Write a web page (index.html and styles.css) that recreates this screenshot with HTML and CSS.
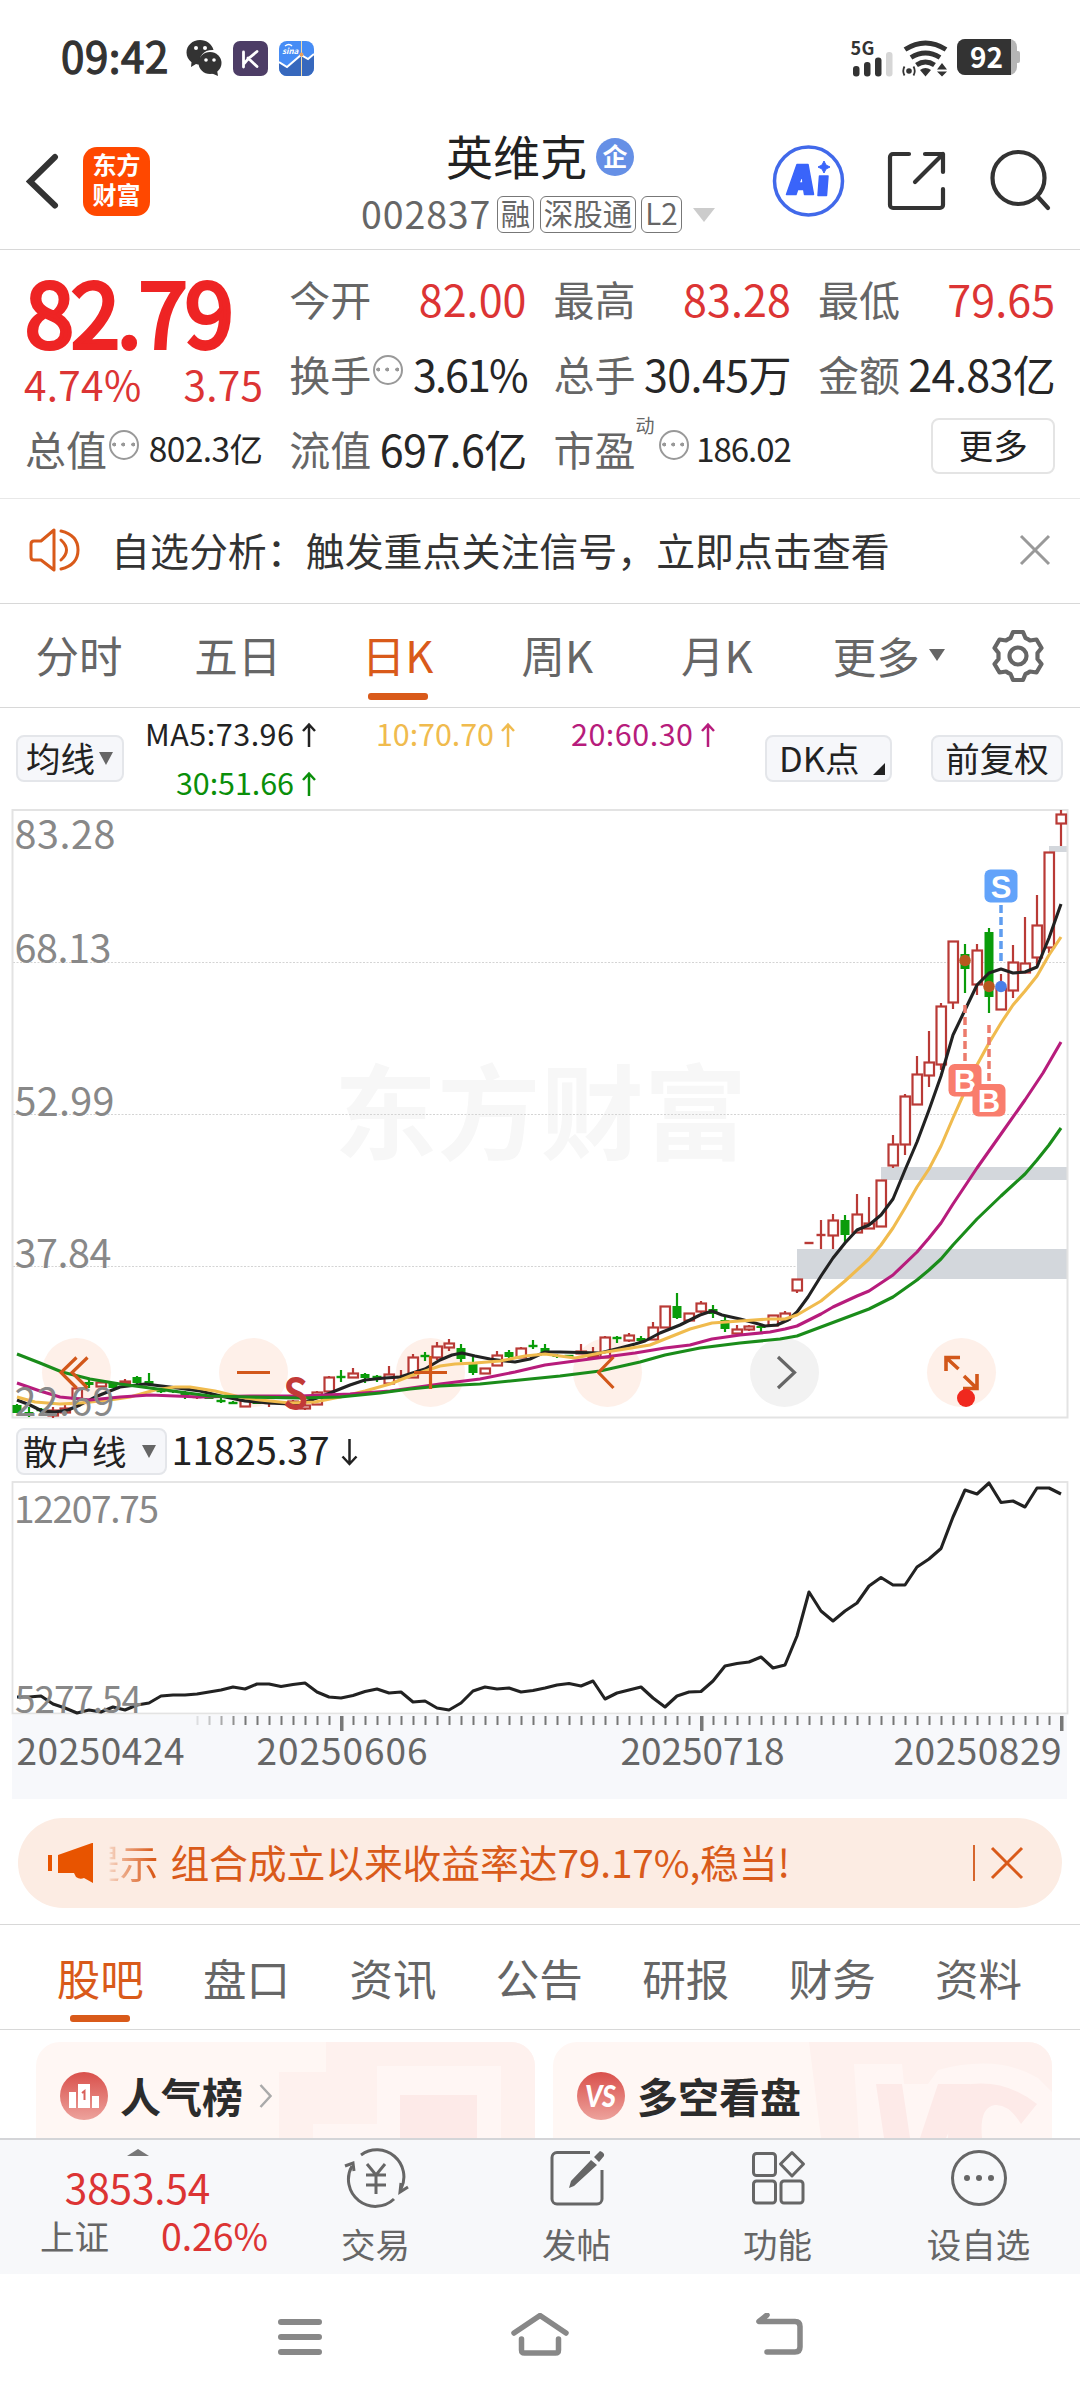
FILE: index.html
```html
<!DOCTYPE html>
<html lang="zh-CN">
<head>
<meta charset="utf-8">
<title>英维克 002837</title>
<link rel="stylesheet" href="styles.css">
</head>
<body>
<div class="status">
  <span class="clock">09:42</span>
  <svg class="st-wechat" width="36" height="38" viewBox="0 0 36 38"><path fill="#333" d="M14 1C6.500 1 .5 6.500 .5 13.500c0 4 2 7.500 5 9.700L5 28l5-3c1.500.4 3 .6 4.500.5C12 17 18 10.500 27.500 11 26 5 20.500 1 14 1z"/><ellipse cx="24" cy="24" rx="11.500" ry="11" fill="#333"/><path fill="#333" d="M25 34l7 3-1-6z"/><g fill="#fff"><circle cx="10" cy="9" r="2"/><circle cx="19" cy="9" r="2"/><circle cx="20" cy="21" r="1.800"/><circle cx="28" cy="21" r="1.800"/></g></svg>
  <svg class="st-app" width="35" height="35" viewBox="0 0 35 35"><rect width="35" height="35" rx="7" fill="#4d3d66"/><path d="M10.500 11v15M24 10.500l-9 7.500c-2 2-3 4-4.500 5M15 17l9 8.500" fill="none" stroke="#fff" stroke-width="2.800" stroke-linecap="round"/></svg>
  <svg class="st-app" width="35" height="35" viewBox="0 0 35 35"><defs><clipPath id="sc"><rect width="35" height="35" rx="8"/></clipPath></defs><g clip-path="url(#sc)"><rect width="35" height="35" fill="#468cf5"/><path d="M0 21l8 5 14-12 7 4 6-5v22H0z" fill="#3768bd"/><path d="M0 21l8 5 14-12 7 4 6-5" fill="none" stroke="#fff" stroke-width="2"/><path d="M22.500 0v35" stroke="#f2dcae"/><circle cx="22.500" cy="13.500" r="2" fill="#e8a060"/><text x="3" y="13" font-size="8" font-weight="700" font-style="italic" fill="#fff">sina</text><path d="M6 5q4-3 7 0" stroke="#fff" fill="none" stroke-width="1.500"/></g></svg>
  <svg class="st-right" width="172" height="46" viewBox="850 35 172 46">
    <text x="850.500" y="54.500" font-size="18" font-weight="700" fill="#333" textLength="24">5G</text>
    <g fill="#333"><rect x="853" y="66" width="6.500" height="10.500" rx="3"/><rect x="864" y="62" width="6.500" height="14.500" rx="3"/><rect x="875" y="57.500" width="6.500" height="19" rx="3"/><rect x="886" y="52" width="6.500" height="24.500" rx="3" fill="#d6d6d6"/></g>
    <g fill="none" stroke="#333" stroke-width="5"><path d="M905 49.500q20.500-13 41 0"/><path d="M911 57.500q14.500-9 29 0"/><path d="M916.500 65q9-6 18 0"/></g>
    <path d="M920 70q5.500-4 11 0l-5.500 6.500z" fill="#333"/>
    <circle cx="909" cy="71" r="2.800" fill="#333"/><path d="M904.500 66.500q-2.500 4.500 0 9M913.500 66.500q2.500 4.500 0 9" fill="none" stroke="#333" stroke-width="1.800"/>
    <path d="M937 69.500l5-6.500 5 6.500zM937 71.500l5 5 5-5z" fill="#333"/>
    <rect x="957" y="39" width="60" height="36" rx="8" fill="#b5b5b5"/><rect x="1014" y="51" width="6" height="12" rx="2" fill="#b5b5b5"/>
    <path d="M965 39h46v36h-46a8 8 0 0 1-8-8V47a8 8 0 0 1 8-8z" fill="#333"/>
    <text x="970" y="67.500" font-size="28" font-weight="700" fill="#fff" textLength="33">92</text>
  </svg>
</div>

<header class="header">
  <svg class="back" width="34" height="56" viewBox="0 0 34 56"><path d="M29 4L4 28.500l25 24" fill="none" stroke="#333" stroke-width="6" stroke-linecap="round"/></svg>
  <div class="logo"><span>东方</span><span>财富</span></div>
  <div class="title">
    <div class="name">英维克<span class="qi">企</span></div>
    <div class="code"><span class="num">002837</span><span class="tag t1">融</span><span class="tag t2">深股通</span><span class="tag t3">L2</span><i class="tri-down"></i></div>
  </div>
  <svg class="h-icons" width="284" height="76" viewBox="771 144 284 76">
    <circle cx="808.500" cy="182" r="34" fill="none" stroke="#4169ea" stroke-width="3.500"/>
    <path d="M786.500 195.500L797 165.500h11l5.500 30h-9l-.8-5h-6l-1.700 5zM799 184h4l-.6-8z" fill="#3a64fa" stroke="#3a64fa" stroke-width="1.500" stroke-linejoin="round"/>
    <path d="M819.500 177h8.500l-1.500 19.500h-8.500z" fill="#3a64fa" stroke="#3a64fa" stroke-width="1.500" stroke-linejoin="round"/><path d="M824 162l2 4 4 2-4 2-2 4-2-4-4-2 4-2z" fill="#3a64fa" stroke="#3a64fa" stroke-width="1"/>
    <g fill="none" stroke="#333" stroke-width="4.200" stroke-linecap="round" stroke-linejoin="round"><path d="M909 155h-16a3 3 0 0 0-3 3v48a3 3 0 0 0 3 3h47a3 3 0 0 0 3-3v-16M925 155h18v18M943 155l-28 28"/><circle cx="1018.500" cy="179" r="26"/><path d="M1038 198l10 11"/></g>
  </svg>
</header>

<section class="quote">
  <div class="main"><div class="price">82.79</div><div class="chg"><span>4.74%</span><span>3.75</span></div></div>
  <div class="q"><span>今开</span><b class="red">82.00</b></div>
  <div class="q"><span>最高</span><b class="red">83.28</b></div>
  <div class="q"><span>最低</span><b class="red">79.65</b></div>
  <div class="q"><span>换手</span><i class="dots"></i><b class="rate">3.61%</b></div>
  <div class="q"><span>总手</span><b>30.45万</b></div>
  <div class="q"><span>金额</span><b>24.83亿</b></div>
  <div class="q"><span>总值</span><i class="dots"></i><b class="sm">802.3亿</b></div>
  <div class="q"><span>流值</span><b>697.6亿</b></div>
  <div class="q"><span>市盈</span><sup>动</sup><i class="dots"></i><b class="sm pe">186.02</b></div>
  <div class="q"><button class="more">更多</button></div>
</section>

<section class="alert">
  <svg width="54" height="46" viewBox="0 0 54 46"><g fill="none" stroke="#d95a1a" stroke-width="3" stroke-linejoin="round" stroke-linecap="round"><path d="M26 3v40L13 33H6q-3 0-3-3V17q0-3 3-3h7z"/><path d="M33 13q11 10 0 20M33 4q17 4 17 19T33 42"/></g></svg>
  <p>自选分析：触发重点关注信号，立即点击查看</p>
  <svg width="32" height="32" viewBox="0 0 32 32"><path d="M2 2l28 28M30 2L2 30" stroke="#999" stroke-width="3"/></svg>
</section>

<nav class="periods">
  <span>分时</span><span>五日</span><span class="on">日K</span><span>周K</span><span>月K</span><span class="pm">更多<i></i></span>
  <svg width="56" height="56" viewBox="-28 -28 56 56"><g fill="none" stroke="#666" stroke-width="4.200" stroke-linejoin="round"><path d="M-5-24H5L7.500-18Q10-17 12-15.500L18.500-16.500 23.500-8 19.500-3V3L23.500 8 18.500 16.500 12 15.500Q10 17 7.500 18L5 24H-5L-7.500 18Q-10 17-12 15.500L-18.500 16.500-23.500 8-19.500 3V-3L-23.500-8-18.500-16.500-12-15.500Q-10-17-7.500-18Z"/><circle r="8.500"/></g></svg>
</nav>

<section class="ma">
  <button class="chip c1">均线<i class="td"></i></button>
  <svg class="ma-vals" width="600" height="90" viewBox="140 716 600 90" font-size="30.500">
    <g fill="#222"><text x="145" y="746" textLength="149">MA5:73.96</text><path class="up" d="M309 747v-22M303 731l6-6.500 6 6.500" stroke="#222"/></g>
    <g fill="#f0bb4e"><text x="376" y="746" textLength="118">10:70.70</text><path class="up" d="M508 747v-22M502 731l6-6.500 6 6.500" stroke="#f0bb4e"/></g>
    <g fill="#b71c7c"><text x="571" y="746" textLength="122">20:60.30</text><path class="up" d="M708 747v-22M702 731l6-6.500 6 6.500" stroke="#b71c7c"/></g>
    <g fill="#0a8f0a"><text x="176" y="795" textLength="118">30:51.66</text><path class="up" d="M309 796v-22M303 780l6-6.500 6 6.500" stroke="#0a8f0a"/></g>
  </svg>
  <button class="chip c2">DK点<i class="corner"></i></button>
  <button class="chip c3">前复权</button>
</section>

<svg class="chart" width="1080" height="612" viewBox="0 808 1080 612">
  <text x="334" y="1152" font-size="103" font-weight="700" fill="#f7f7f7" textLength="413">东方财富</text>
  <g fill="#d3d7dc"><rect x="797" y="1249" width="270" height="30"/><rect x="881" y="1167" width="186" height="13"/><rect x="1049" y="846" width="18" height="6"/></g>
  <g stroke="#d4d4d4" stroke-width="1" stroke-dasharray="2 1.500"><path d="M13 962.500H1067M13 1114.500H1067M13 1266.500H797"/></g>
  <rect x="12.500" y="810" width="1055" height="607.500" fill="none" stroke="#e3e3e3" stroke-width="2"/>
  <g fill="#fef0e9"><circle cx="76.500" cy="1372.500" r="34.500"/><circle cx="253.500" cy="1372.500" r="34.500"/><circle cx="430.500" cy="1372.500" r="34.500"/><circle cx="607.500" cy="1372.500" r="34.500"/><circle cx="784.500" cy="1372.500" r="34.500" fill="#f2f2f2"/><circle cx="961.500" cy="1372.500" r="34.500"/></g>
  <g id="candles"></g>
  <g class="line">
    <polyline stroke="#222" points="17,1400 30,1405 42,1411 55,1412 68,1410 80,1405 95,1397 120,1387 145,1384 170,1387 200,1391 225,1397 245,1401 269,1403 290,1404 305,1402 320,1397 335,1391 350,1385 365,1380 385,1378 400,1377 425,1369 440,1360 452,1355 462,1353 475,1356 490,1359 505,1361 515,1362 530,1359 545,1352 560,1352 600,1353 620,1348 635,1344 645,1341 660,1333 680,1325 700,1315 712,1311 722,1315 740,1319 755,1323 765,1326 777,1325 788,1320 797,1312 808,1297 821,1276 833,1258 845,1243 857,1230 869,1225 881,1215 893,1199 905,1170 917,1142 929,1110 941,1076 953,1035 965,1010 977,985 989,973 1001,969 1013,973 1025,972 1037,967 1049,938 1061,904"/>
    <polyline stroke="#f0bb4e" points="17,1397 35,1402 60,1404 80,1403 110,1400 130,1397 155,1390 175,1387 190,1387 215,1391 240,1397 260,1400 290,1403 315,1402 340,1397 365,1391 390,1384 410,1376 425,1371 440,1366 455,1364 475,1363 500,1361 525,1356 545,1354 575,1358 600,1353 625,1349 650,1345 670,1337 690,1329 712,1323 740,1321 770,1319 785,1319 797,1315 821,1301 845,1281 869,1259 881,1245 893,1228 905,1208 917,1187 929,1169 941,1146 953,1118 965,1091 977,1065 989,1043 1001,1023 1013,1005 1025,991 1037,976 1049,955 1061,937"/>
    <polyline stroke="#b71c7c" points="17,1383 40,1391 60,1397 90,1400 120,1397 150,1395 200,1397 250,1396 300,1396 350,1394 390,1391 440,1384 480,1379 515,1372 545,1365 590,1359 635,1353 665,1348 690,1345 712,1339 740,1335 770,1332 785,1329 797,1326 821,1314 833,1307 857,1296 869,1291 893,1275 917,1252 929,1238 941,1223 953,1204 965,1186 977,1168 1001,1134 1025,1100 1043,1073 1061,1042"/>
    <polyline stroke="#1a8c1a" points="17,1354 40,1363 62,1372 90,1379 120,1384 150,1388 180,1392 210,1396 250,1397 300,1398 340,1397 380,1393 410,1389 440,1386 480,1384 520,1380 560,1376 600,1371 640,1362 665,1355 700,1348 740,1343 780,1339 797,1336 821,1327 845,1318 869,1309 893,1297 917,1280 929,1270 941,1259 953,1245 977,1219 1001,1196 1025,1174 1037,1160 1049,1145 1061,1128"/>
  </g>
  <g fill="#b9581f"><circle cx="965" cy="960.500" r="5.800"/><circle cx="989" cy="986.500" r="5.800"/><circle cx="1001" cy="986.500" r="5.800" fill="#4a7fe8"/></g>
  <g fill="none" stroke-width="3.500" stroke-dasharray="8 4"><path d="M1001 905V962" stroke="#5f9df0"/><path d="M965 1005V1062M989 1025V1083" stroke="#ec7b6c"/></g>
  <g font-size="31" font-weight="700" fill="#fff" text-anchor="middle" class="mark">
    <rect x="984.500" y="869.500" width="33" height="33" rx="6" fill="#62a3fa"/><text x="1001" y="898">S</text>
    <rect x="948.500" y="1064" width="33" height="32.500" rx="6" fill="#f97d6d"/><text x="965" y="1092">B</text>
    <rect x="972.500" y="1084" width="33" height="32.500" rx="6" fill="#f97d6d"/><text x="989" y="1112">B</text>
  </g>
  <text x="284" y="1407.500" font-size="40" class="sell" fill="#c23a38" textLength="23" lengthAdjust="spacingAndGlyphs">S</text>
  <g fill="#888" font-size="39.500"><text x="14.500" y="849" textLength="101">83.28</text><text x="14.500" y="963" textLength="97">68.13</text><text x="14.500" y="1115.500" textLength="100">52.99</text><text x="14.500" y="1267.500" textLength="97">37.84</text><text x="14.500" y="1416" textLength="100">22.69</text></g>
  <g fill="none" stroke="#d2571a" stroke-width="3.200"><path d="M76.500 1357.500L61 1372.500l15.500 15.500M87.500 1357.500L72 1372.500l15.500 15.500M237 1372.500h33M414 1372.500h33M430.500 1356v33M613.500 1357l-15 15.500 15 15.500"/><path d="M778 1357l16.500 15.500L778 1388" stroke="#666"/><path d="M946 1371v-13.500h14M946 1357.500l12.500 11.500M977 1374v14.500h-14M977 1388.500l-13-12.500" stroke-width="3.600"/></g>
  <circle cx="966" cy="1398" r="9" fill="#f0281e"/>
</svg>

<section class="ind">
  <button class="chip c4">散户线<i class="td"></i></button>
  <svg width="200" height="46" viewBox="170 1428 200 46"><text x="171.500" y="1464.500" font-size="38" fill="#222" textLength="158">11825.37</text><path class="up" d="M349.500 1439v25M342.500 1456.500l7 7.500 7-7.500" stroke="#222"/></svg>
</section>

<svg class="chart" width="1080" height="318" viewBox="0 1481 1080 318">
  <rect x="12" y="1715" width="1055" height="84" fill="#f7f8fb"/>
  <rect x="12.500" y="1482" width="1055" height="231.500" fill="#fff" stroke="#e3e3e3" stroke-width="1.800"/>
  <g class="line"><polyline stroke="#222" points="17,1697 29,1697 41,1696 53,1704 65,1708 77,1713 89,1710 101,1712 113,1707 125,1710 137,1705 149,1703 161,1696 173,1695 185,1695 197,1694 209,1692 221,1690 233,1687 245,1689 257,1684 269,1684 281,1686.500 293,1684.500 305,1683 317,1692 329,1697 341,1698 353,1695.500 365,1691.500 377,1689 389,1693 401,1692 413,1702 425,1701 437,1708 449,1710 461,1703 473,1691 485,1687 497,1689 509,1688 521,1692 533,1690.500 545,1688 557,1685 569,1683.500 581,1686 593,1681 605,1699 617,1693 629,1690 641,1687 653,1698 665,1707 677,1696 689,1692 701,1691.500 713,1681 725,1666 737,1663.500 749,1662 761,1657 773,1668 785,1665 797,1636 809,1592 821,1611 833,1621 845,1611 857,1603 869,1586 881,1577.500 893,1585 905,1585 917,1567 929,1559 941,1548.500 953,1517 965,1490 977,1494 989,1483 1001,1502.500 1013,1501 1025,1507 1037,1488 1049,1488 1061,1494"/></g>
  <g id="ticks" fill="#777"></g>
  <g fill="#888" font-size="37"><text x="14" y="1522.500" textLength="145">12207.75</text><text x="15" y="1713" textLength="127">5277.54</text></g>
  <g fill="#666" font-size="37"><text x="16.500" y="1765" textLength="168">20250424</text><text x="256.500" y="1765" textLength="171">20250606</text><text x="620.500" y="1765" textLength="164">20250718</text><text x="893.500" y="1765" textLength="168">20250829</text></g>
</svg>

<section class="notice">
  <svg width="48" height="42" viewBox="0 0 48 42"><path d="M46 1v40l-9-5q-4 2-8-1l-2-4H11V13L45 1z" fill="#e85400"/><path d="M3 13v16" stroke="#e85400" stroke-width="4"/></svg>
  <p><span class="fade">提示</span>组合成立以来收益率达79.17%,稳当!</p>
  <svg class="nx" width="54" height="38" viewBox="0 0 54 38"><path d="M2 1v36" stroke="#d2571a" stroke-width="1.800"/><path d="M20 4l30 30M50 4L20 34" stroke="#d95a1a" stroke-width="3"/></svg>
</section>

<nav class="subtabs"><span class="on">股吧</span><span>盘口</span><span>资讯</span><span>公告</span><span>研报</span><span>财务</span><span>资料</span></nav>

<section class="cards">
  <div class="card">
    <svg class="bg" width="499" height="96" viewBox="0 0 499 96"><path d="M290 0H499V96H243V30h47z" fill="#fef1ee"/><path d="M341 24h124v72H277V82h64z" fill="#fff6f4"/><rect x="364" y="53" width="77" height="43" fill="#fdeae8"/></svg>
    <svg class="ic" width="48" height="48" viewBox="0 0 48 48"><defs><linearGradient id="g" x1="0" y1="0" x2="0" y2="1"><stop offset="0" stop-color="#d9504b"/><stop offset="1" stop-color="#eda29c"/></linearGradient></defs><circle cx="24" cy="24" r="24" fill="url(#g)"/><path d="M9 36V20h7v16zM18 36V12h12v24zM32 36V24h7v12z" fill="#fff"/><path d="M22 21l2.500-2v9" fill="none" stroke="#d9605b" stroke-width="2"/></svg>
    <h3>人气榜</h3><svg width="14" height="26" viewBox="0 0 14 26"><path d="M1.500 2l10 11-10 11" fill="none" stroke="#aaa" stroke-width="2.500"/></svg>
  </div>
  <div class="card">
    <svg class="bg" width="499" height="96" viewBox="0 0 499 96"><path d="M256 0H499V96H268z" fill="#fef1ee"/><path d="M301 22h48l2 20h24l10-14q60-16 100 8l14 14v46H306z" fill="#fff6f4"/><path d="M323 42h26l8 54h-26zM385 42h33l-25 54h-26z" fill="#fdeae8"/><path d="M418 42q36-4 66 20l-16 20q-12-20-26-19-16 2-13 33h-34q0-30 23-54z" fill="#fdeae8"/></svg>
    <svg class="ic" width="48" height="48" viewBox="0 0 48 48"><circle cx="24" cy="24" r="24" fill="url(#g)"/><text x="8" y="35" font-size="30" font-weight="900" font-style="italic" class="lato" fill="#fff" textLength="31" lengthAdjust="spacingAndGlyphs">VS</text></svg>
    <h3>多空看盘</h3>
  </div>
</section>

<footer class="bar">
  <div class="idx"><i class="tri-up"></i><div class="pt">3853.54</div><div class="row"><span>上证</span><b>0.26%</b></div></div>
  <div class="it"><svg width="66" height="60" viewBox="-33 -30 66 60"><g fill="none" stroke="#666" stroke-width="3"><path d="M-15-23A27 27 0 0 1 25 11M18 21A27 27 0 0 1-24-12"/><path d="M-31-12l8-3 1 8M32 9l-8 5 1-9"/><path d="M-9-14L0-3 9-14M0-3V16M-10-3H10M-10 7H10"/></g></svg><span>交易</span></div>
  <div class="it"><svg width="66" height="60" viewBox="-33 -30 66 60"><g fill="none" stroke="#666" stroke-width="3"><path d="M13-25.500H-20a5 5 0 0 0-5 5V21a5 5 0 0 0 5 5H20a5 5 0 0 0 5-5V-8"/></g><path d="M14-18l6 5L-3 8l-5 2 2-7zM17-21l6-6q5 2 4 5l-5 6z" fill="#666"/></svg><span>发帖</span></div>
  <div class="it"><svg width="66" height="60" viewBox="-33 -30 66 60"><g fill="none" stroke="#666" stroke-width="3" stroke-linejoin="round"><rect x="-24.500" y="-24.500" width="22" height="22" rx="3"/><rect x="-24.500" y="3" width="22" height="22" rx="3"/><rect x="3" y="3" width="22" height="22" rx="3"/><path d="M14-25.500L25.500-14 14-2 2.500-14z"/></g></svg><span>功能</span></div>
  <div class="it"><svg width="66" height="60" viewBox="-33 -30 66 60"><circle r="26.500" fill="none" stroke="#666" stroke-width="3"/><g fill="#666"><circle cx="-12" r="3"/><circle r="3"/><circle cx="12" r="3"/></g></svg><span>设自选</span></div>
</footer>

<div class="sysnav">
  <svg width="48" height="48" viewBox="0 0 48 48"><path d="M5 9h38M5 24h38M5 39h38" stroke="#888" stroke-width="6" stroke-linecap="round"/></svg>
  <svg width="60" height="48" viewBox="0 0 60 48"><g fill="none" stroke="#888" stroke-width="5.500" stroke-linecap="round" stroke-linejoin="round"><path d="M4 20L30 2.500 56 20"/><path d="M11.500 26v11q0 3 3 3h31q3 0 3-3V26"/></g></svg>
  <svg width="52" height="48" viewBox="0 0 52 48"><path d="M14 2L6 8.500h36q5 0 5 5V34q0 5-5 5H14" fill="none" stroke="#888" stroke-width="5.500" stroke-linecap="round" stroke-linejoin="round"/></svg>
</div>
<script src="script.js"></script>
</body>
</html>
```
FILE: styles.css
```css
* { box-sizing: border-box; }
body { margin: 0; width: 1080px; height: 2400px; overflow: hidden; background: #fff; color: #222; font-family: "Noto Sans CJK SC", "Noto Sans", sans-serif; display: flex; flex-direction: column; }
svg { display: block; flex: none; }
button { font: inherit; color: inherit; padding: 0; margin: 0; white-space: nowrap; }
i { font-style: normal; }
p, h3 { margin: 0; }
span, b, p, h3 { white-space: nowrap; }

.status { height: 112px; flex: none; display: flex; align-items: center; padding: 4px 58px 0 61px; }
.clock { font-size: 42px; line-height: 60px; width: 125px; font-weight: 400; letter-spacing: .6px; color: #333; -webkit-text-stroke: 1.300px #333; margin-top: -7px; }
.st-wechat { margin-right: 11px; }
.st-app { margin-right: 11px; }
.st-right { margin-left: auto; }

.header { height: 138px; flex: none; display: flex; align-items: center; border-bottom: 1.500px solid #d8d8d8; }
.back { margin-left: 26px; margin-top: 1px; }
.logo { margin-left: 23px; margin-top: 1px; width: 67px; height: 69px; border-radius: 14px; background: #ff4800; color: #fff; font-weight: 700; font-size: 24px; line-height: 30px; display: flex; flex-direction: column; align-items: center; justify-content: center; padding-bottom: 4px; }
.title { margin-left: 211px; width: 361px; height: 138px; }
.name { display: flex; align-items: center; font-size: 47px; height: 60px; line-height: 60px; margin: 13px 0 0 85px; }
.qi { width: 38px; height: 38px; border-radius: 50%; background: #6690e6; color: #fff; font-size: 25px; line-height: 34px; text-align: center; font-weight: 700; margin: 4px 0 0 9px; }
.code { display: flex; align-items: center; height: 40px; margin-top: 10px; color: #666; }
.num { font-size: 37.500px; line-height: 40px; width: 136px; letter-spacing: .9px; margin-top: -4px; }
.tag { height: 37px; border: 1.500px solid #777; border-radius: 6px; font-size: 29.500px; line-height: 31px; text-align: center; margin-right: 6px; }
.t1 { width: 37px; }
.t2 { width: 96px; margin-right: 5px; }
.t3 { width: 41px; margin-right: 11px; }
.tri-down { border: 11px solid transparent; border-top: 14px solid #ccc; border-bottom: 0; }
.h-icons { margin-left: auto; margin-right: 25px; margin-top: 1px; }
.lato { font-family: Lato, sans-serif; }

.quote { height: 249px; flex: none; padding: 10px 25px 0 25px; display: grid; grid-template-columns: repeat(4, 237.300px); grid-template-rows: repeat(3, 75px); column-gap: 27px; border-bottom: 1.500px solid #e8e8e8; }
.main { grid-row: span 2; color: #ee2424; }
.price { font-size: 88px; line-height: 96px; font-weight: 400; letter-spacing: -2.800px; margin: 2px 0 0 0; -webkit-text-stroke: 4px #ee2424; }
.chg { display: flex; justify-content: space-between; font-size: 40.500px; line-height: 50px; color: #dc3434; margin: 1px -1px 0 -1px; letter-spacing: .3px; }
.q { display: flex; align-items: center; font-size: 41px; line-height: 60px; color: #666; }
.q b { margin-left: auto; font-weight: 400; color: #262626; font-size: 43px; letter-spacing: -.6px; }
.q b.red { color: #dc3434; letter-spacing: .1px; }
.q b.rate { letter-spacing: -1.900px; }
.q b.sm { font-size: 33.500px; }
.q b.pe { font-size: 33px; letter-spacing: -1px; }
.q sup { font-size: 19px; line-height: 20px; align-self: flex-start; margin-top: 5px; color: #666; }
.dots { width: 30px; height: 30px; border: 2.500px solid #999; border-radius: 50%; margin: -5px 0 0 2px; background: radial-gradient(circle, #999 1.800px, transparent 2.200px) 0 0 / 6.500px 25px no-repeat, radial-gradient(circle, #999 1.800px, transparent 2.200px) 9.200px 0 / 6.500px 25px no-repeat, radial-gradient(circle, #999 1.800px, transparent 2.200px) 18.500px 0 / 6.500px 25px no-repeat; }
sup + .dots { margin-left: 4px; }
.more { margin-left: auto; width: 124px; height: 56px; border: 2px solid #e4e4e4; border-radius: 8px; background: #fff; font-size: 34.500px; line-height: 46px; color: #222; padding-bottom: 4px; margin-top: -3px; }

.alert { height: 105px; flex: none; display: flex; align-items: center; padding: 0 29px 2px 28px; border-bottom: 1.500px solid #d8d8d8; }
.alert p { font-size: 38.950px; line-height: 60px; margin: -3px auto 0 29px; color: #333; }

.periods { height: 104px; flex: none; display: grid; grid-template-columns: 158px repeat(4, 159.700px) 172px 1fr; align-items: center; border-bottom: 1.500px solid #d8d8d8; color: #666; font-size: 43.500px; }
.periods span { text-align: center; height: 104px; line-height: 102px; position: relative; }
.periods .pm { display: flex; align-items: center; gap: 9px; padding-left: 36px; }
.pm i { border: 8px solid transparent; border-top: 12px solid #666; border-bottom: 0; margin-top: -3px; }
.periods svg { margin-left: 21px; }
.periods .on, .subtabs .on { color: #d95a1a; }
.on::after { content: ""; position: absolute; left: 50%; bottom: 8px; width: 60px; height: 7px; margin-left: -30px; border-radius: 3px; background: #d95a1a; }

.ma { height: 100px; flex: none; display: flex; align-items: flex-start; padding: 27px 15px 0 16px; }
.ma-vals { margin: -19px 25px 0 16px; }
.up { fill: none; stroke-width: 2.500px; }
.chip { height: 47px; border: 2px solid #e4e6ea; border-radius: 8px; background: #f6f7fa; font-size: 34.500px; line-height: 38px; display: flex; align-items: center; position: relative; flex: none; padding-bottom: 4px; }
.c1 { width: 108px; padding-left: 8px; gap: 4px; }
.c2 { width: 127px; padding-left: 12px; }
.c3 { width: 132px; justify-content: center; margin-left: 39px; }
.c4 { width: 151px; padding-left: 5px; gap: 15px; }
.td { border: 7.500px solid transparent; border-top: 13px solid #666; border-bottom: 0; margin-top: 4px; }
.corner { position: absolute; right: 5px; bottom: 5px; border-left: 12px solid transparent; border-bottom: 12px solid #222; }

.chart { font-family: inherit; }
.line polyline { fill: none; stroke-width: 3.100; stroke-linejoin: round; }
.mark { font-family: "Liberation Sans", sans-serif; }
.sell { stroke: #c23a38; stroke-width: 2; }
.ind { height: 61px; flex: none; display: flex; align-items: flex-start; gap: 3px; padding: 8px 16px 0; }

.notice { margin: 19px 18px 0 18px; height: 90px; flex: none; border-radius: 45px; background: #fcece3; display: flex; align-items: center; padding: 0 36px 0 29px; color: #d95a1a; }
.notice p { font-size: 38.800px; line-height: 60px; margin: -4px 0 0 3px; letter-spacing: -.1px; }
.fade { margin-right: 12px; background: linear-gradient(90deg, rgba(217,90,26,0) 0, rgba(217,90,26,0) 28px, rgba(217,90,26,.2) 30px, rgba(217,90,26,.45) 42px, #d95a1a 72px); -webkit-background-clip: text; background-clip: text; color: transparent; }
.notice p .fade { margin-left: -17px; }
.nx { margin-left: auto; }

.subtabs { margin-top: 16px; height: 106px; flex: none; border-top: 1.500px solid #d8d8d8; border-bottom: 1.500px solid #d8d8d8; padding: 0 28px 0 27px; display: grid; grid-template-columns: repeat(7, 146.400px); font-size: 43.500px; color: #666; }
.subtabs span { text-align: center; line-height: 105px; position: relative; }

.cards { height: 108px; flex: none; display: flex; gap: 18px; padding: 12px 28px 0 36px; overflow: hidden; }
.card { width: 499px; height: 96px; border-radius: 24px 24px 0 0; background: #fff7f4; position: relative; overflow: hidden; display: flex; align-items: center; padding: 12px 0 0 24px; }
.card > * { position: relative; }
.card .bg { position: absolute; left: 0; top: 0; }
.card h3 { font-size: 41px; line-height: 50px; margin: -3px 16px 0 12px; color: #2c2c2c; }

.bar { height: 136px; flex: none; background: #f7f8fa; border-top: 2px solid #d4d5d8; display: grid; grid-template-columns: 275px repeat(4, 201px); }
.idx { display: flex; flex-direction: column; align-items: center; padding-top: 9px; }
.tri-up { border: 11px solid transparent; border-bottom: 7px solid #777; border-top: 0; }
.pt { font-size: 40.500px; line-height: 50px; color: #dc3434; margin-top: 6px; letter-spacing: -.1px; }
.row { display: flex; justify-content: space-between; width: 226px; line-height: 50px; font-size: 34.500px; color: #666; margin-top: -2px; margin-left: 31px; }
.row b { font-weight: 400; font-size: 37.500px; color: #dc3434; width: 105px; letter-spacing: -.1px; }
.it { display: flex; flex-direction: column; align-items: center; padding-top: 8px; }
.it span { font-size: 34.500px; line-height: 50px; color: #666; margin-top: 10px; }

.sysnav { height: 126px; flex: none; display: flex; align-items: flex-start; padding: 39px 0 0 276px; }
.sysnav svg:nth-child(2) { margin-left: 186px; }
.sysnav svg:nth-child(3) { margin-left: 183px; }
```
FILE: script.js
```js
// [high, bodyTop, bodyBottom, low, direction], newest trading day first
const days = [
[810,814,823,846,1],[852,852,947,953,1],[895,925,957,965,1],[917,963,972,972,1],[945,962,990,998,1],[974,988,1009,1009,1],[928,932,997,1013,0],[944,950,984,995,1],[944,954,969,993,0],[941,941,1002,1009,1],[1003,1006,1064,1070,1],[1031,1062,1075,1087,1],[1056,1074,1104,1104,1],[1094,1096,1144,1155,1],[1135,1144,1165,1168,1],[1180,1180,1226,1226,1],[1197,1223,1228,1228,1],[1194,1214,1232,1232,1],[1215,1220,1235,1242,0],[1214,1220,1235,1249,1],[1220,1235,1235,1249,1],[1243,1243,1243,1243,1],[1279,1279,1290,1293,1],
[1311,1313,1319,1319,1],[1315,1315,1325,1325,1],[1325,1326,1328,1332,0],[1325,1326,1329,1331,1],[1325,1329,1333,1333,1],[1317,1320,1329,1332,0],[1305,1309,1314,1318,0],[1301,1303,1311,1313,1],[1313,1313,1320,1320,1],[1293,1306,1318,1319,0],[1306,1306,1327,1327,1],[1322,1327,1339,1339,1],[1336,1338,1341,1341,0],[1333,1335,1340,1342,1],[1336,1338,1339,1343,0],[1336,1337,1357,1357,1],[1347,1355,1357,1357,1],[1344,1351,1353,1353,1],[1355,1356,1357,1357,0],[1354,1355,1357,1358,0],[1344,1348,1352,1352,0],[1340,1346,1347,1349,0],[1347,1348,1357,1357,1],[1350,1352,1357,1358,0],[1351,1355,1365,1365,1],[1368,1368,1373,1373,1],[1356,1362,1373,1375,0],[1344,1348,1359,1362,0],[1339,1343,1347,1351,1],[1342,1346,1357,1360,1],[1352,1356,1357,1361,0],[1354,1357,1377,1378,1],
[1370,1377,1377,1380,1],[1366,1374,1383,1384,1],[1375,1377,1378,1382,0],[1373,1374,1378,1383,0],[1368,1373,1377,1377,1],[1370,1377,1377,1382,0],[1376,1377,1391,1391,1],[1391,1392,1404,1404,1],[1404,1405,1408,1410,1],[1400,1401,1404,1404,1],[1403,1403,1403,1403,1],[1400,1403,1404,1407,1],[1400,1400,1404,1404,0],[1400,1400,1406,1406,1],[1401,1403,1404,1404,0],[1398,1401,1402,1403,0],[1396,1397,1399,1399,0],[1396,1397,1398,1399,1],[1391,1394,1395,1399,0],[1390,1391,1392,1393,0],[1390,1391,1392,1393,0],[1373,1381,1384,1384,0],[1376,1377,1383,1384,0],[1379,1381,1383,1384,1],[1382,1382,1388,1388,0],[1382,1382,1386,1386,1],[1380,1382,1385,1388,0],[1388,1388,1398,1398,1],[1405,1408,1412,1412,1],[1407,1410,1415,1418,1],[1408,1410,1411,1415,0],[1407,1412,1414,1417,0],[1404,1405,1413,1413,0]
];
const LAST_X = 1061, STEP = 12;
let out = "";
days.forEach(([h, t, b, l, up], k) => {
  const x = LAST_X - k * STEP;
  const color = up ? "#b93a36" : "#0a9c0a";
  const wick = up ? `M${x} ${h}V${t}M${x} ${b}V${l}` : `M${x} ${h}V${l}`;
  out += `<path d="${wick}" stroke="${color}" stroke-width="2.2"/>`;
  if (b - t < 2) out += `<path d="M${x - 4.5} ${t}h9" stroke="${color}" stroke-width="2.4"/>`;
  else if (up) out += `<rect x="${x - 4.5}" y="${t + 0.5}" width="9.500" height="${b - t}" fill="#fff" stroke="${color}" stroke-width="2.2"/>`;
  else out += `<rect x="${x - 4.5}" y="${t}" width="9" height="${b - t}" fill="${color}"/>`;
});
document.getElementById("candles").innerHTML = out;

let ticks = "";
for (let k = 0; k <= 72; k++) {
  const x = 1061.5 - k * 12;
  const major = k === 0 || k === 30 || k === 60;
  const fade = k > 68 ? (73 - k) * 0.2 : 1;
  ticks += `<rect x="${x - (major ? 1.5 : 1)}" y="1716" width="${major ? 3.5 : 2}" height="${major ? 15 : 9}" opacity="${fade}"/>`;
}
document.getElementById("ticks").innerHTML = ticks;
```
